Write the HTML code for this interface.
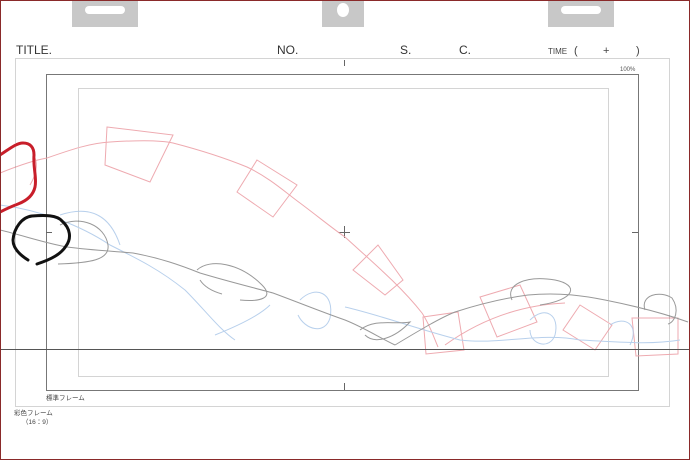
<!DOCTYPE html>
<html><head><meta charset="utf-8"><style>
html,body{margin:0;padding:0;background:#fff;}
svg{display:block}
text{font-family:"Liberation Sans","Noto Sans CJK JP",sans-serif;}
</style></head><body>
<svg width="690" height="460" viewBox="0 0 690 460" xmlns="http://www.w3.org/2000/svg">
<rect x="0" y="0" width="690" height="460" fill="#fff"/>
<!-- tabs -->
<rect x="72" y="0" width="66" height="27" fill="#c8c8c8"/>
<rect x="85" y="6" width="40" height="8" rx="4" fill="#fff"/>
<rect x="322" y="0" width="42" height="27" fill="#c8c8c8"/>
<ellipse cx="343" cy="10" rx="6" ry="7" fill="#fff"/>
<rect x="548" y="0" width="66" height="27" fill="#c8c8c8"/>
<rect x="561" y="6" width="40" height="8" rx="4" fill="#fff"/>
<!-- header text -->
<text x="16" y="54" font-size="12" fill="#333">TITLE.</text>
<text x="277" y="54" font-size="12" fill="#333">NO.</text>
<text x="400" y="54" font-size="12" fill="#333">S.</text>
<text x="459" y="54" font-size="12" fill="#333">C.</text>
<text x="548" y="54" font-size="8" fill="#444">TIME</text>
<text x="574" y="54" font-size="11" fill="#444">(</text>
<text x="603" y="54" font-size="11" fill="#444">+</text>
<text x="636" y="54" font-size="11" fill="#444">)</text>
<text x="620" y="71" font-size="6" fill="#555">100%</text>
<!-- frames -->
<rect x="15.5" y="58.5" width="654" height="348" fill="none" stroke="#aaa" stroke-dasharray="1,1"/>
<rect x="46.5" y="74.5" width="592" height="316" fill="none" stroke="#777" stroke-width="1"/>
<rect x="78.5" y="88.5" width="530" height="288" fill="none" stroke="#aaa" stroke-dasharray="1,1"/>
<!-- ticks -->
<line x1="344.5" y1="60" x2="344.5" y2="66" stroke="#666"/>
<line x1="344.5" y1="383" x2="344.5" y2="390" stroke="#666"/>
<line x1="46" y1="232.5" x2="52" y2="232.5" stroke="#666"/>
<line x1="632" y1="232.5" x2="638" y2="232.5" stroke="#666"/>
<line x1="338" y1="232.5" x2="350" y2="232.5" stroke="#666"/>
<line x1="344.5" y1="226" x2="344.5" y2="238" stroke="#666"/>
<text x="46" y="400" font-size="6.5" fill="#444">標準フレーム</text>
<text x="14" y="415" font-size="6.5" fill="#444">彩色フレーム</text>
<text x="22" y="424" font-size="6.5" fill="#444">（16：9）</text>
<!-- pink sketch -->
<g fill="none" stroke="#eeaab0" stroke-width="1">
<path d="M0,173 C20,165 35,160 47,158 C70,150 90,143 110,142 C140,140 160,140 173,143 C200,150 225,158 247,167 C270,178 285,192 300,203 C320,218 332,228 345,237 C370,260 400,285 422,313 C430,325 434,338 438,347"/>
<path d="M107,127 L173,135 L150,182 L105,165 Z"/>
<path d="M257,160 L297,185 L273,217 L237,192 Z"/>
<path d="M378,245 L403,280 L385,295 L353,270 Z"/>
<path d="M423,317 L458,312 L464,350 L426,354 Z"/>
<path d="M480,297 L520,285 L537,322 L497,337 Z"/>
<path d="M580,305 L612,325 L595,350 L563,330 Z"/>
<path d="M632,318 L678,318 L678,354 L636,356 Z"/>
<path d="M445,345 C480,320 520,305 565,303"/>
<path d="M30,185 C36,175 38,165 35,158"/>
</g>
<!-- blue sketch -->
<g fill="none" stroke="#b8d0ec" stroke-width="1">
<path d="M0,205 C40,210 80,225 110,245 C140,260 160,270 185,290 C205,310 220,330 235,340"/>
<path d="M60,215 C90,205 110,215 120,245"/>
<path d="M300,300 C315,285 335,292 330,318 C325,335 305,330 298,315"/>
<path d="M215,335 C240,325 260,315 270,305"/>
<path d="M345,307 C380,315 420,330 460,340 C500,345 540,332 580,340 C620,342 650,345 680,340"/>
<path d="M530,320 C545,305 560,315 555,335 C550,350 530,345 530,330"/>
<path d="M610,325 C625,315 640,325 630,345"/>
</g>
<!-- gray sketch -->
<g fill="none" stroke="#999" stroke-width="1">
<path d="M0,230 C25,236 45,243 67,247 C90,250 110,251 133,253 C160,258 180,265 200,273 C230,282 255,288 273,293 C300,303 322,312 345,320 C365,328 380,338 395,345"/>
<path d="M395,345 C420,330 440,318 455,312 C480,304 505,298 528,295 C560,292 585,296 605,300 C630,305 660,312 688,322"/>
<path d="M197,270 C210,258 240,263 262,285 C275,298 260,302 240,300"/>
<path d="M200,280 C205,288 215,292 222,294"/>
<path d="M512,300 C505,285 525,275 555,280 C580,285 575,300 540,305"/>
<path d="M645,310 C640,295 660,290 672,298 C680,310 675,322 668,324"/>
<path d="M360,330 C375,318 395,325 410,322 C395,338 375,345 365,335"/>
<path d="M60,225 C80,215 105,225 108,245 C110,260 90,263 58,264"/>
</g>
<!-- red thick stroke -->
<path d="M0,155 C8,150 16,143 23,143 C30,143 34,147 34,155 C33,168 37,178 35,187 C33,196 26,201 18,204 C10,207 4,210 0,212" fill="none" stroke="#c81e2a" stroke-width="3" stroke-linecap="round"/>
<!-- black thick stroke -->
<path d="M28,260 C20,255 13,248 13,240 C14,228 22,217 32,216 C45,215 57,215 62,221 C70,228 72,238 66,246 C61,254 52,259 37,264" fill="none" stroke="#111" stroke-width="3" stroke-linecap="round"/>
<!-- horizontal line -->
<line x1="0" y1="349.5" x2="690" y2="349.5" stroke="#555" stroke-width="1"/>
<!-- outer border -->
<rect x="0.5" y="0.5" width="689" height="459" fill="none" stroke="#8a2a2a" stroke-width="1"/>
</svg>
</body></html>
